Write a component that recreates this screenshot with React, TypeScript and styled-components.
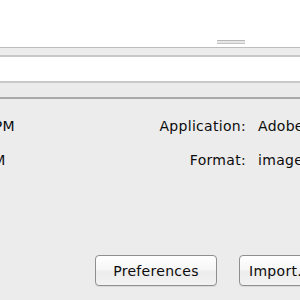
import React from "react";
import styled, { createGlobalStyle } from "styled-components";

const GlobalStyle = createGlobalStyle`
	html, body {
		margin: 0;
		padding: 0;
		overflow: hidden;
		background: #ffffff;
	}
	body {
		font-family: "DejaVu Sans", "Liberation Sans", sans-serif;
		font-size: 14px;
		letter-spacing: 0.3px;
		color: #0c0c0c;
	}
`;

interface IInfoRow {
	stamp: string;
	label: string;
	value: string;
}

const rows: IInfoRow[] = [
	{ stamp: "October 14, 2009 4:12 PM", label: "Application:", value: "Adobe Photoshop CS4" },
	{ stamp: "October 1, 2009 4:12 PM", label: "Format:", value: "image/jpeg" },
];

const App: React.FC = () => {
	return (
		<>
			<GlobalStyle />
			<Window>
				<TopArea>
					<Grip />
				</TopArea>
				<Toolbar />
				<ListArea />
				<HeaderBar />
				<InfoPanel>
					<InfoGrid>
						{rows.map((v, k) => (
							<React.Fragment key={k}>
								<Stamp>{v.stamp}</Stamp>
								<Label>{v.label}</Label>
								<Value>{v.value}</Value>
							</React.Fragment>
						))}
					</InfoGrid>
					<Footer>
						<Button $minWidth={122}>Preferences</Button>
						<Button>Import...</Button>
					</Footer>
				</InfoPanel>
			</Window>
		</>
	);
};

export default App;

const Window = styled.div`
	display: flex;
	flex-direction: column;
	height: 300px;
	width: 300px;
	overflow: hidden;
`;

const TopArea = styled.div`
	height: 47px;
	box-sizing: border-box;
	padding: 40px 0 0 217px;
	background: #ffffff;
`;

const Grip = styled.div`
	width: 28px;
	height: 4px;
	box-sizing: border-box;
	border-top: 1px solid #b9b9b9;
	border-bottom: 1px solid #c4c4c4;
	background: #e6e6e6;
`;

const Toolbar = styled.div`
	height: 10px;
	box-sizing: border-box;
	background: #ececec;
	border-top: 1px solid #bdbdbd;
	border-bottom: 2px solid #c8c8c8;
`;

const ListArea = styled.div`
	height: 24px;
	background: #ffffff;
`;

const HeaderBar = styled.div`
	height: 18px;
	box-sizing: border-box;
	background: #ebebeb;
	border-top: 2px solid #c9c9c9;
	border-bottom: 2px solid #a9a9a9;
`;

const InfoPanel = styled.div`
	flex: 1;
	display: flex;
	flex-direction: column;
	background: #ececec;
	padding-top: 19px;
`;

const InfoGrid = styled.div`
	display: grid;
	grid-template-columns: 200px 210px auto;
	column-gap: 12px;
	row-gap: 18px;
	margin-left: -176px;
	line-height: 16px;
	white-space: nowrap;
`;

const Stamp = styled.div`
	text-align: left;
`;

const Label = styled.div`
	text-align: right;
`;

const Value = styled.div`
	text-align: left;
`;

const Footer = styled.div`
	margin-top: auto;
	display: flex;
	gap: 22px;
	padding: 0 0 14px 95px;
`;

const Button = styled.button<{ $minWidth?: number }>`
	height: 31px;
	min-width: ${(p) => (p.$minWidth ? `${p.$minWidth}px` : "auto")};
	padding: 0 9px;
	flex-shrink: 0;
	font-family: "DejaVu Sans", "Liberation Sans", sans-serif;
	font-size: 14px;
	letter-spacing: 0.3px;
	color: #0c0c0c;
	white-space: nowrap;
	border: 1px solid #8f8f8f;
	border-radius: 4px;
	background: linear-gradient(#ffffff 0%, #f7f7f7 45%, #ececec 55%, #f3f3f3 100%);
	box-shadow: 0 1px 0 rgba(0, 0, 0, 0.08);
`;
